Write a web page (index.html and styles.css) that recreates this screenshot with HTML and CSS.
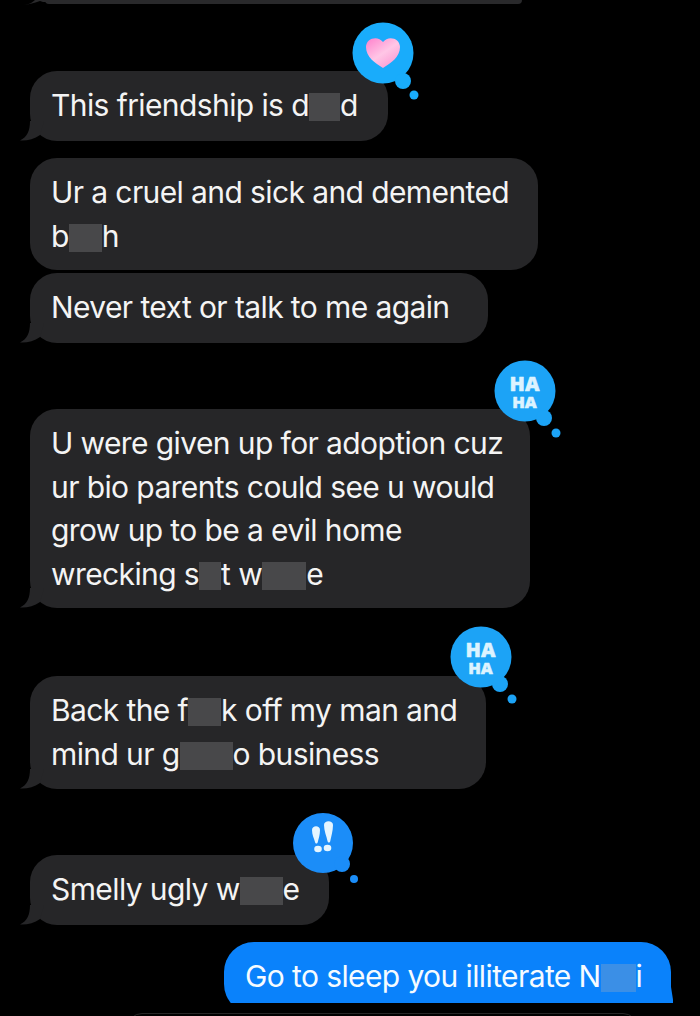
FILE: index.html
```html
<!DOCTYPE html>
<html lang="en">
<head>
<meta charset="utf-8">
<title>Messages</title>
<link rel="stylesheet" href="styles.css">
</head>
<body>
<main class="thread">
  <div class="prev-bubble">
    <svg class="prev-tail" viewBox="0 0 26 5"><path d="M0 5 C8 5 12 3 15 0 L26 0 L26 2 C24 2 22 2 20 1 C14 3 8 5 0 5Z"/></svg>
  </div>

  <div class="bubble b1">This friendship is d<span class="blur w31"></span>d
    <svg class="tail" viewBox="0 0 24 20"><path d="M10 0 C10 10 7 16 0 19.500 C7 20 14 18 20 14 L24 0Z"/></svg>
    <svg class="reaction r1" viewBox="0 0 70 70">
      <defs>
        <linearGradient id="hg" x1="0" y1="0" x2="0.800" y2="1"><stop offset="0" stop-color="#ff7fcb"/><stop offset="0.550" stop-color="#ffc6e6"/><stop offset="1" stop-color="#fb97d2"/></linearGradient>
      </defs>
      <circle cx="31" cy="31" r="30.500"/><circle cx="51" cy="59" r="8"/><circle cx="62" cy="73" r="4.500"/>
      <path class="heart" fill="url(#hg)" d="M31 46 C23 41 14 35 14 25 C14 16 26 13 31 20 C36 13 48 16 48 25 C48 35 39 41 31 46Z"/>
    </svg>
  </div>

  <div class="bubble b2">Ur a cruel and sick and demented<br>b<span class="blur w33"></span>h</div>

  <div class="bubble b3">Never text or talk to me again
    <svg class="tail" viewBox="0 0 24 20"><path d="M10 0 C10 10 7 16 0 19.500 C7 20 14 18 20 14 L24 0Z"/></svg>
  </div>

  <div class="bubble b4">U were given up for adoption cuz<br>ur bio parents could see u would<br>grow up to be a evil home<br>wrecking s<span class="blur w22"></span>t w<span class="blur w44"></span>e
    <svg class="tail" viewBox="0 0 24 20"><path d="M10 0 C10 10 7 16 0 19.500 C7 20 14 18 20 14 L24 0Z"/></svg>
    <svg class="reaction r2" viewBox="0 0 70 70">
      <circle cx="31" cy="31" r="30.500"/><circle cx="50" cy="58" r="8"/><circle cx="62" cy="73" r="4.500"/>
      <text class="ha" x="30.500" y="31">HA<tspan class="small" x="30.500" dy="16.500">HA</tspan></text>
    </svg>
  </div>

  <div class="bubble b5">Back the f<span class="blur w33"></span>k off my man and<br>mind ur g<span class="blur w53"></span>o business
    <svg class="tail" viewBox="0 0 24 20"><path d="M10 0 C10 10 7 16 0 19.500 C7 20 14 18 20 14 L24 0Z"/></svg>
    <svg class="reaction r3" viewBox="0 0 70 70">
      <circle cx="31" cy="31" r="30.500"/><circle cx="50" cy="58" r="8"/><circle cx="62" cy="73" r="4.500"/>
      <text class="ha" x="30.500" y="31">HA<tspan class="small" x="30.500" dy="16.500">HA</tspan></text>
    </svg>
  </div>

  <div class="bubble b6">Smelly ugly w<span class="blur w43"></span>e
    <svg class="tail" viewBox="0 0 24 20"><path d="M10 0 C10 10 7 16 0 19.500 C7 20 14 18 20 14 L24 0Z"/></svg>
    <svg class="reaction r4" viewBox="0 0 70 70">
      <circle cx="31" cy="31" r="30"/><circle cx="50" cy="52" r="8"/><circle cx="62" cy="67" r="4"/>
      <path class="bang" d="M20 18 C20 13 28 13 28 18 C28 23 26.500 27 25.800 30 C25.300 32 23.500 32 23 30 C22 26 20 23 20 18Z"/>
      <path class="bang" d="M32 13 C32 8 41 8 41 13 C41 19 39 25 38.300 29 C37.800 31 36 31 35.500 29 C34.500 24 32 19 32 13Z"/>
      <ellipse class="bang" cx="26" cy="37" rx="3.800" ry="3.300"/><ellipse class="bang" cx="35.500" cy="36" rx="3.800" ry="3.300"/>
    </svg>
  </div>

  <div class="sent-clip">
    <div class="bubble sent">Go to sleep you illiterate N<span class="blur blue w35"></span>i
      <svg class="tail-right" viewBox="0 0 3 16"><path d="M0 0 L2.500 16 L0 16Z"/></svg>
    </div>
  </div>
  <div class="composer"></div>
</main>
</body>
</html>
```
FILE: styles.css
```css
* { box-sizing: border-box; }
html, body { margin: 0; height: 100%; background: #000; }
body { overflow: hidden; }
.thread {
  width: 700px;
  height: 1016px;
  overflow: hidden;
  display: flex;
  flex-direction: column;
  align-items: flex-start;
  padding-left: 30px;
  font-family: Inter, "Liberation Sans", sans-serif;
  font-size: 30px;
  letter-spacing: -0.600px;
  line-height: 43.500px;
  color: #f4f4f4;
  background: #000;
}
.prev-bubble {
  position: relative;
  flex: none;
  width: 477px;
  height: 4px;
  margin-left: 15px;
  background: #29292b;
  border-radius: 0 0 14px 14px;
}
.prev-tail {
  position: absolute;
  left: -25px;
  top: 0;
  width: 26px;
  height: 5px;
  fill: #29292b;
}
.bubble {
  position: relative;
  flex: none;
  background: #262628;
  border-radius: 27px;
  padding: 13px 21px;
  white-space: nowrap;
}
.b1 { width: 358px; height: 70px; margin-top: 67px; }
.b2 { width: 508px; height: 112px; margin-top: 17px; }
.b3 { width: 458px; height: 70px; margin-top: 3px; }
.b4 { width: 500px; height: 199px; margin-top: 66px; }
.b5 { width: 456px; height: 113px; margin-top: 68px; }
.b6 { width: 299px; height: 70px; margin-top: 66px; }
.blur {
  display: inline-block;
  height: 28px;
  vertical-align: -5px;
  background: #48484a;
  filter: blur(0.600px);
}
.w22 { width: 22px; }
.w31 { width: 31px; }
.w33 { width: 33px; }
.w35 { width: 35px; }
.w43 { width: 43px; }
.w44 { width: 44px; }
.w53 { width: 53px; }
.tail {
  position: absolute;
  left: -10px;
  bottom: 0;
  width: 24px;
  height: 20px;
  fill: #262628;
}
.reaction {
  position: absolute;
  width: 70px;
  height: 70px;
  overflow: visible;
}
.r1 { left: 322px; top: -49px; fill: #19acfb; }
.r2 { left: 464px; top: -49px; fill: #1ca3f6; }
.r3 { left: 420px; top: -50px; fill: #1ca3f6; }
.r4 { left: 262px; top: -43px; fill: #1b8df8; }
.ha {
  font-family: "Open Sans", "Liberation Sans", sans-serif;
  font-size: 20px;
  font-weight: 800;
  letter-spacing: 0;
  fill: #dcf3ff;
  stroke: #dcf3ff;
  stroke-width: 0.500px;
  stroke-linejoin: round;
  text-anchor: middle;
}
.ha .small { font-size: 16.500px; }
.bang { fill: #e6f6ff; }
.sent-clip {
  flex: none;
  width: 449px;
  height: 61px;
  margin: 17px 0 0 194px;
  overflow: hidden;
}
.bubble.sent {
  width: 447px;
  height: 72px;
  background: #0a82fb;
  color: #f6fbff;
  border-radius: 30px 30px 0 30px;
}
.tail-right {
  position: absolute;
  right: -3px;
  top: 45px;
  width: 3px;
  height: 16px;
  fill: #0a82fb;
}
.blur.blue { background: #3b8fe6; }
.composer {
  flex: none;
  width: 511px;
  height: 30px;
  margin: 10px 0 0 97px;
  border: 1px solid #262626;
  border-radius: 16px;
}
```
